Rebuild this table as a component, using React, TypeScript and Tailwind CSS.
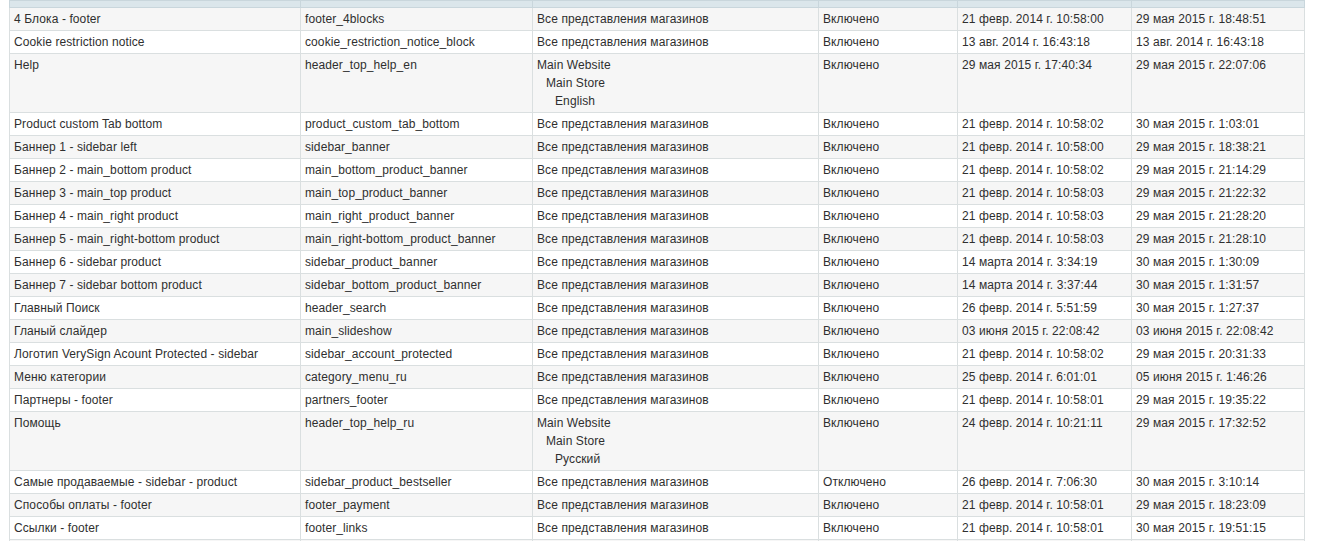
import React from "react";

type Row = {
  title: string;
  id: string;
  store: string | string[];
  status: string;
  created: string;
  modified: string;
};

const ALL = "Все представления магазинов";

const rows: Row[] = [
  { title: "4 Блока - footer", id: "footer_4blocks", store: ALL, status: "Включено", created: "21 февр. 2014 г. 10:58:00", modified: "29 мая 2015 г. 18:48:51" },
  { title: "Cookie restriction notice", id: "cookie_restriction_notice_block", store: ALL, status: "Включено", created: "13 авг. 2014 г. 16:43:18", modified: "13 авг. 2014 г. 16:43:18" },
  { title: "Help", id: "header_top_help_en", store: ["Main Website", "Main Store", "English"], status: "Включено", created: "29 мая 2015 г. 17:40:34", modified: "29 мая 2015 г. 22:07:06" },
  { title: "Product custom Tab bottom", id: "product_custom_tab_bottom", store: ALL, status: "Включено", created: "21 февр. 2014 г. 10:58:02", modified: "30 мая 2015 г. 1:03:01" },
  { title: "Баннер 1 - sidebar left", id: "sidebar_banner", store: ALL, status: "Включено", created: "21 февр. 2014 г. 10:58:00", modified: "29 мая 2015 г. 18:38:21" },
  { title: "Баннер 2 - main_bottom product", id: "main_bottom_product_banner", store: ALL, status: "Включено", created: "21 февр. 2014 г. 10:58:02", modified: "29 мая 2015 г. 21:14:29" },
  { title: "Баннер 3 - main_top product", id: "main_top_product_banner", store: ALL, status: "Включено", created: "21 февр. 2014 г. 10:58:03", modified: "29 мая 2015 г. 21:22:32" },
  { title: "Баннер 4 - main_right product", id: "main_right_product_banner", store: ALL, status: "Включено", created: "21 февр. 2014 г. 10:58:03", modified: "29 мая 2015 г. 21:28:20" },
  { title: "Баннер 5 - main_right-bottom product", id: "main_right-bottom_product_banner", store: ALL, status: "Включено", created: "21 февр. 2014 г. 10:58:03", modified: "29 мая 2015 г. 21:28:10" },
  { title: "Баннер 6 - sidebar product", id: "sidebar_product_banner", store: ALL, status: "Включено", created: "14 марта 2014 г. 3:34:19", modified: "30 мая 2015 г. 1:30:09" },
  { title: "Баннер 7 - sidebar bottom product", id: "sidebar_bottom_product_banner", store: ALL, status: "Включено", created: "14 марта 2014 г. 3:37:44", modified: "30 мая 2015 г. 1:31:57" },
  { title: "Главный Поиск", id: "header_search", store: ALL, status: "Включено", created: "26 февр. 2014 г. 5:51:59", modified: "30 мая 2015 г. 1:27:37" },
  { title: "Гланый слайдер", id: "main_slideshow", store: ALL, status: "Включено", created: "03 июня 2015 г. 22:08:42", modified: "03 июня 2015 г. 22:08:42" },
  { title: "Логотип VerySign Acount Protected - sidebar", id: "sidebar_account_protected", store: ALL, status: "Включено", created: "21 февр. 2014 г. 10:58:02", modified: "29 мая 2015 г. 20:31:33" },
  { title: "Меню категории", id: "category_menu_ru", store: ALL, status: "Включено", created: "25 февр. 2014 г. 6:01:01", modified: "05 июня 2015 г. 1:46:26" },
  { title: "Партнеры - footer", id: "partners_footer", store: ALL, status: "Включено", created: "21 февр. 2014 г. 10:58:01", modified: "29 мая 2015 г. 19:35:22" },
  { title: "Помощь", id: "header_top_help_ru", store: ["Main Website", "Main Store", "Русский"], status: "Включено", created: "24 февр. 2014 г. 10:21:11", modified: "29 мая 2015 г. 17:32:52" },
  { title: "Самые продаваемые - sidebar - product", id: "sidebar_product_bestseller", store: ALL, status: "Отключено", created: "26 февр. 2014 г. 7:06:30", modified: "30 мая 2015 г. 3:10:14" },
  { title: "Способы оплаты - footer", id: "footer_payment", store: ALL, status: "Включено", created: "21 февр. 2014 г. 10:58:01", modified: "29 мая 2015 г. 18:23:09" },
  { title: "Ссылки - footer", id: "footer_links", store: ALL, status: "Включено", created: "21 февр. 2014 г. 10:58:01", modified: "30 мая 2015 г. 19:51:15" },
  { title: "", id: "", store: "", status: "", created: "", modified: "" },
];

const td = "border border-[#dadfe0] px-[4px] py-[2px] align-top whitespace-nowrap leading-[18px] tracking-[0.1px]";
const th = "border border-[#c9d6dc] p-0 h-[7px]";

export default function App() {
  return (
    <div
      className="w-[1326px] h-[541px] overflow-hidden bg-white text-[12px] text-[#2f2f2f]"
      style={{ fontFamily: '"Liberation Sans", Arial, sans-serif' }}
    >
      <table className="ml-[9px] w-[1295px] table-fixed border-collapse">
        <colgroup>
          <col className="w-[291px]" />
          <col className="w-[232px]" />
          <col className="w-[286px]" />
          <col className="w-[139px]" />
          <col className="w-[174px]" />
          <col className="w-[173px]" />
        </colgroup>
        <thead>
          <tr className="bg-[#dbe6eb]">
            <th className={th}></th>
            <th className={th}></th>
            <th className={th}></th>
            <th className={th}></th>
            <th className={th}></th>
            <th className={th}></th>
          </tr>
        </thead>
        <tbody>
          {rows.map((r, i) => (
            <tr key={i} className={i % 2 === 0 ? "bg-[#f6f6f6]" : "bg-white"}>
              <td className={td}>{r.title}</td>
              <td className={td}>{r.id}</td>
              <td className={td}>
                {Array.isArray(r.store) ? (
                  <div>
                    <div>{r.store[0]}</div>
                    <div className="pl-[9px]">{r.store[1]}</div>
                    <div className="pl-[18px]">{r.store[2]}</div>
                  </div>
                ) : (
                  r.store
                )}
              </td>
              <td className={td}>{r.status}</td>
              <td className={td}>{r.created}</td>
              <td className={td}>{r.modified}</td>
            </tr>
          ))}
        </tbody>
      </table>
    </div>
  );
}
